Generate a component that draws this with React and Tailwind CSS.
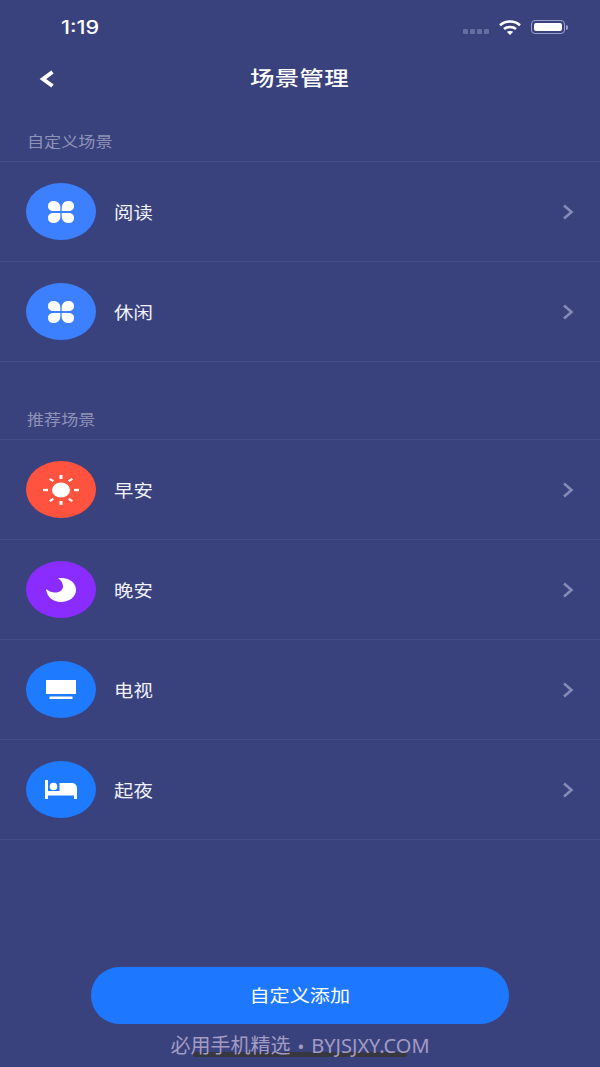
const cjk = { fontFamily: '"Noto Sans CJK SC", "Noto Sans", sans-serif' }

function Clover() {
    return (
        <svg width="26" height="22" viewBox="0 0 26 22" fill="white">
            <path d="M12.3 10 L5.5 10 C2.2 10 0 8.2 0 5 C0 2 2.2 0 5.5 0 C9.5 0 12.3 2.5 12.3 6.5 Z" />
            <path d="M13.7 10 L20.5 10 C23.8 10 26 8.2 26 5 C26 2 23.8 0 20.5 0 C16.5 0 13.7 2.5 13.7 6.5 Z" />
            <path d="M12.3 12 L5.5 12 C2.2 12 0 13.8 0 17 C0 20 2.2 22 5.5 22 C9.5 22 12.3 19.5 12.3 15.5 Z" />
            <path d="M13.7 12 L20.5 12 C23.8 12 26 13.8 26 17 C26 20 23.8 22 20.5 22 C16.5 22 13.7 19.5 13.7 15.5 Z" />
        </svg>
    )
}

function Sun() {
    return (
        <svg width="36" height="30" viewBox="0 0 36 30" fill="white">
            <ellipse cx="18" cy="15" rx="9" ry="7.5" />
            <rect x="16.5" y="0" width="3" height="4" />
            <rect x="16.5" y="26" width="3" height="4" />
            <rect x="0" y="13.8" width="5" height="2.4" />
            <rect x="31" y="13.8" width="5" height="2.4" />
            <path d="M6 4.5 L7.5 3 L11 5.5 L9.5 7 Z" />
            <path d="M30 4.5 L28.5 3 L25 5.5 L26.5 7 Z" />
            <path d="M6 25.5 L7.5 27 L11 24.5 L9.5 23 Z" />
            <path d="M30 25.5 L28.5 27 L25 24.5 L26.5 23 Z" />
        </svg>
    )
}

function Moon() {
    return (
        <svg width="30" height="24" viewBox="0 0 30 24" fill="white">
            <path d="M12 0 C22 -1 30 4 30 12 C30 19 23 24 15 24 C7 24 1 19 0 11 C3 13.5 6 14.5 9 14.5 C18 14.5 20 6 12 0 Z" />
        </svg>
    )
}

function Tv() {
    return (
        <svg width="30" height="19" viewBox="0 0 30 19" fill="white">
            <rect x="0" y="0" width="30" height="14" />
            <rect x="3.5" y="16.5" width="23" height="2.5" />
        </svg>
    )
}

function Bed() {
    return (
        <svg width="32" height="19" viewBox="0 0 32 19" fill="white">
            <rect x="0" y="0" width="3" height="19" />
            <circle cx="8.5" cy="6.5" r="3.8" />
            <path d="M14.5 3 H27 A5 5 0 0 1 32 8 V19 H29 V15.5 H3 V11 H14.5 Z" />
        </svg>
    )
}

function Row({ icon, color, label }) {
    return (
        <div className="h-[100px] flex items-center border-b border-white/[0.06] pl-[26px] pr-[26px]">
            <div className={`w-[70px] h-[57px] rounded-[50%] flex items-center justify-center ${color}`}>
                {icon}
            </div>
            <span className="ml-[17.5px] inline-block origin-left scale-x-[1.14] text-[17px] text-[#f1f2f8]" style={cjk}>{label}</span>
            <svg className="ml-auto" width="12" height="16" viewBox="0 0 12 16" fill="none" stroke="#858bb5" strokeWidth="2.6">
                <path d="M2 1.5 L9.5 8 L2 14.5" />
            </svg>
        </div>
    )
}

function SectionTitle({ children }) {
    return (
        <div className="h-[58px] flex items-end pl-[26.5px] pb-[10px] border-b border-white/[0.06]">
            <span className="inline-block origin-left scale-x-[1.18] text-[14.5px] leading-5 text-[#8f93b8]" style={cjk}>{children}</span>
        </div>
    )
}

export default function App() {
    return (
        <div className="relative w-[600px] h-[1067px] bg-[#3a427e] overflow-hidden flex flex-col">
            {/* status bar */}
            <div className="h-[54px] flex items-center pl-[61px] pr-[32px]">
                <span className="inline-block origin-left scale-x-[1.2] text-[18px] font-medium text-white" style={{ fontFamily: 'Inter, sans-serif' }}>1:19</span>
                <div className="ml-auto flex items-center">
                    <div className="flex gap-[2px] mt-[8px] mr-[10px]">
                        <span className="w-[5px] h-[5px] rounded-[1px] bg-[#666da0]"></span>
                        <span className="w-[5px] h-[5px] rounded-[1px] bg-[#666da0]"></span>
                        <span className="w-[5px] h-[5px] rounded-[1px] bg-[#666da0]"></span>
                        <span className="w-[5px] h-[5px] rounded-[1px] bg-[#666da0]"></span>
                    </div>
                    <svg width="22" height="15" viewBox="0 0 22 15" fill="none" stroke="white" strokeWidth="2.6">
                        <path d="M1 5.2 C6.5 0.2 15.5 0.2 21 5.2" />
                        <path d="M5 9 C8 6.4 14 6.4 17 9" />
                        <path d="M11 15 L7.8 11.8 C9.5 10.6 12.5 10.6 14.2 11.8 Z" fill="white" stroke="none" />
                    </svg>
                    <div className="ml-[10px] w-[34px] h-[14px] border border-[#9aa0cc] rounded-[4px] p-[2px]">
                        <div className="w-full h-full bg-white rounded-[2px]"></div>
                    </div>
                    <div className="w-[2px] h-[5px] ml-[1px] bg-[#9aa0cc] rounded-r-sm"></div>
                </div>
            </div>

            {/* nav */}
            <div className="relative h-[50px] flex items-center justify-center pb-[2px]">
                <svg className="absolute left-[39px] top-[16px]" width="16" height="18" viewBox="0 0 16 18" fill="none" stroke="white" strokeWidth="4">
                    <path d="M13.5 2 L4 9 L13.5 16" />
                </svg>
                <span className="inline-block scale-x-[1.22] text-[20px] font-medium tracking-[0.3px] text-white" style={cjk}>场景管理</span>
            </div>

            <SectionTitle>自定义场景</SectionTitle>
            <Row icon={<Clover />} color="bg-[#3d80ff]" label="阅读" />
            <Row icon={<Clover />} color="bg-[#3d80ff]" label="休闲" />

            <div className="mt-[20px]">
                <SectionTitle>推荐场景</SectionTitle>
            </div>
            <Row icon={<Sun />} color="bg-[#ff523f]" label="早安" />
            <Row icon={<Moon />} color="bg-[#8a2cff]" label="晚安" />
            <Row icon={<Tv />} color="bg-[#1e7aff]" label="电视" />
            <Row icon={<Bed />} color="bg-[#1e7aff]" label="起夜" />

            <button className="mt-auto mb-[43px] mx-[91px] h-[57px] rounded-full bg-[#1e78ff] text-white" style={cjk}>
                <span className="inline-block scale-x-[1.15] text-[17.5px]">自定义添加</span>
            </button>

            {/* home indicator + watermark sit over the page */}
            <div className="absolute left-[193px] top-[1052px] w-[214px] h-[5px] rounded-full bg-[#37373f]"></div>
            <div className="absolute left-0 right-0 top-[1031.5px] flex items-center justify-center text-[20px] leading-7 text-[#a29cc4]" style={{ fontFamily: '"Noto Sans", "Noto Sans CJK SC", sans-serif' }}>
                <span>必用手机精选</span>
                <span className="mx-[7px] text-[18px]">•</span>
                <span>BYJSJXY.COM</span>
            </div>
        </div>
    )
}
